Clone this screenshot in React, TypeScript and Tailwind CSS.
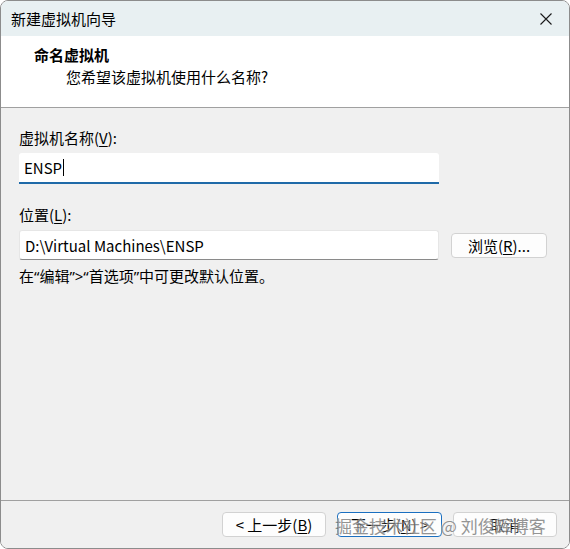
import React from 'react';

const cjk = { fontFamily: '"Noto Sans CJK SC", "Noto Sans", sans-serif' };
const mixed = { fontFamily: '"Noto Sans", "Noto Sans CJK SC", sans-serif' };

const Mnemonic = ({ k }: { k: string }) => <span className="underline underline-offset-2">{k}</span>;

const Button = ({ children, focused = false, w = 'w-[104px]' }: { children: React.ReactNode; focused?: boolean; w?: string }) => (
  <button
    className={`${w} h-[25px] rounded-[4px] bg-[#fdfdfd] text-[15px] leading-none text-black flex items-center justify-center ${
      focused ? 'border border-[#1a6fc0] shadow-[inset_0_0_0_1px_#ffffff]' : 'border border-[#d2d2d2]'
    }`}
  >
    {children}
  </button>
);

export default function App() {
  return (
    <div className="w-[570px] h-[549px] bg-white" style={cjk}>
      <div className="w-full h-full flex flex-col border border-[#8c8c8c] rounded-[8px] overflow-hidden relative">
        {/* title bar */}
        <div className="h-[35px] bg-[#e8f0f2] flex items-center justify-between pl-[10px] pr-[16px]">
          <span className="text-[15px] text-black leading-none">新建虚拟机向导</span>
          <svg width="12" height="12" viewBox="0 0 12 12" className="mr-[1px]">
            <path d="M0.5 0.5 L11.5 11.5 M11.5 0.5 L0.5 11.5" stroke="#1a1a1a" strokeWidth="1.1" fill="none" />
          </svg>
        </div>

        {/* header */}
        <div className="h-[72px] bg-white border-b border-[#a0a0a0] pt-[9px]">
          <div className="pl-[33px] text-[15px] font-bold leading-[20px] text-black">命名虚拟机</div>
          <div className="pl-[65px] mt-[2px] text-[15px] leading-[20px] text-black">您希望该虚拟机使用什么名称?</div>
        </div>

        {/* body */}
        <div className="flex-1 bg-[#f0f0f0] pl-[18px] pt-[20px]">
          <div className="text-[15px] leading-[20px] text-black">
            虚拟机名称(<Mnemonic k="V" />):
          </div>
          <div className="mt-[5px] w-[420px] h-[31px] bg-white rounded-t-[3px] border-b-[2px] border-[#1f6aa8] flex items-center pl-[5px]">
            <span className="text-[15px] leading-none text-black">ENSP</span>
            <span className="w-[1px] h-[17px] bg-black ml-[1px]" />
          </div>

          <div className="mt-[21px] text-[15px] leading-[20px] text-black">
            位置(<Mnemonic k="L" />):
          </div>
          <div className="mt-[5px] flex items-center gap-[12px]">
            <div className="w-[420px] h-[30px] bg-white border border-[#e6e6e6] border-b-[#8a8a8a] rounded-[3px] flex items-center pl-[5px]">
              <span className="text-[15px] leading-none text-black">D:\Virtual Machines\ENSP</span>
            </div>
            <Button w="w-[96px]">
              浏览(<Mnemonic k="R" />)...
            </Button>
          </div>

          <div className="mt-[6px] text-[15px] leading-[20px] text-black" style={mixed}>
            在“编辑”&gt;“首选项”中可更改默认位置。
          </div>
        </div>

        {/* footer */}
        <div className="h-[48px] bg-[#f0f0f0] border-t border-[#a0a0a0] flex justify-end items-start pt-[11px] pr-[12px]">
          <div className="flex gap-[11px]">
            <Button>
              &lt; 上一步(<Mnemonic k="B" />)
            </Button>
            <Button focused w="w-[105px]">
              下一步(<Mnemonic k="N" />) &gt;
            </Button>
            <Button>取消</Button>
          </div>
        </div>

        {/* watermark */}
        <div
          className="absolute left-[334px] top-[513px] text-[17px] leading-[24px] text-[#7a7a7a] opacity-80 whitespace-nowrap pointer-events-none"
          style={{ textShadow: '0 0 2px #ffffff, 0 0 2px #ffffff' }}
        >
          掘金技术社区 @ 刘俊辉博客
        </div>
      </div>
    </div>
  );
}
